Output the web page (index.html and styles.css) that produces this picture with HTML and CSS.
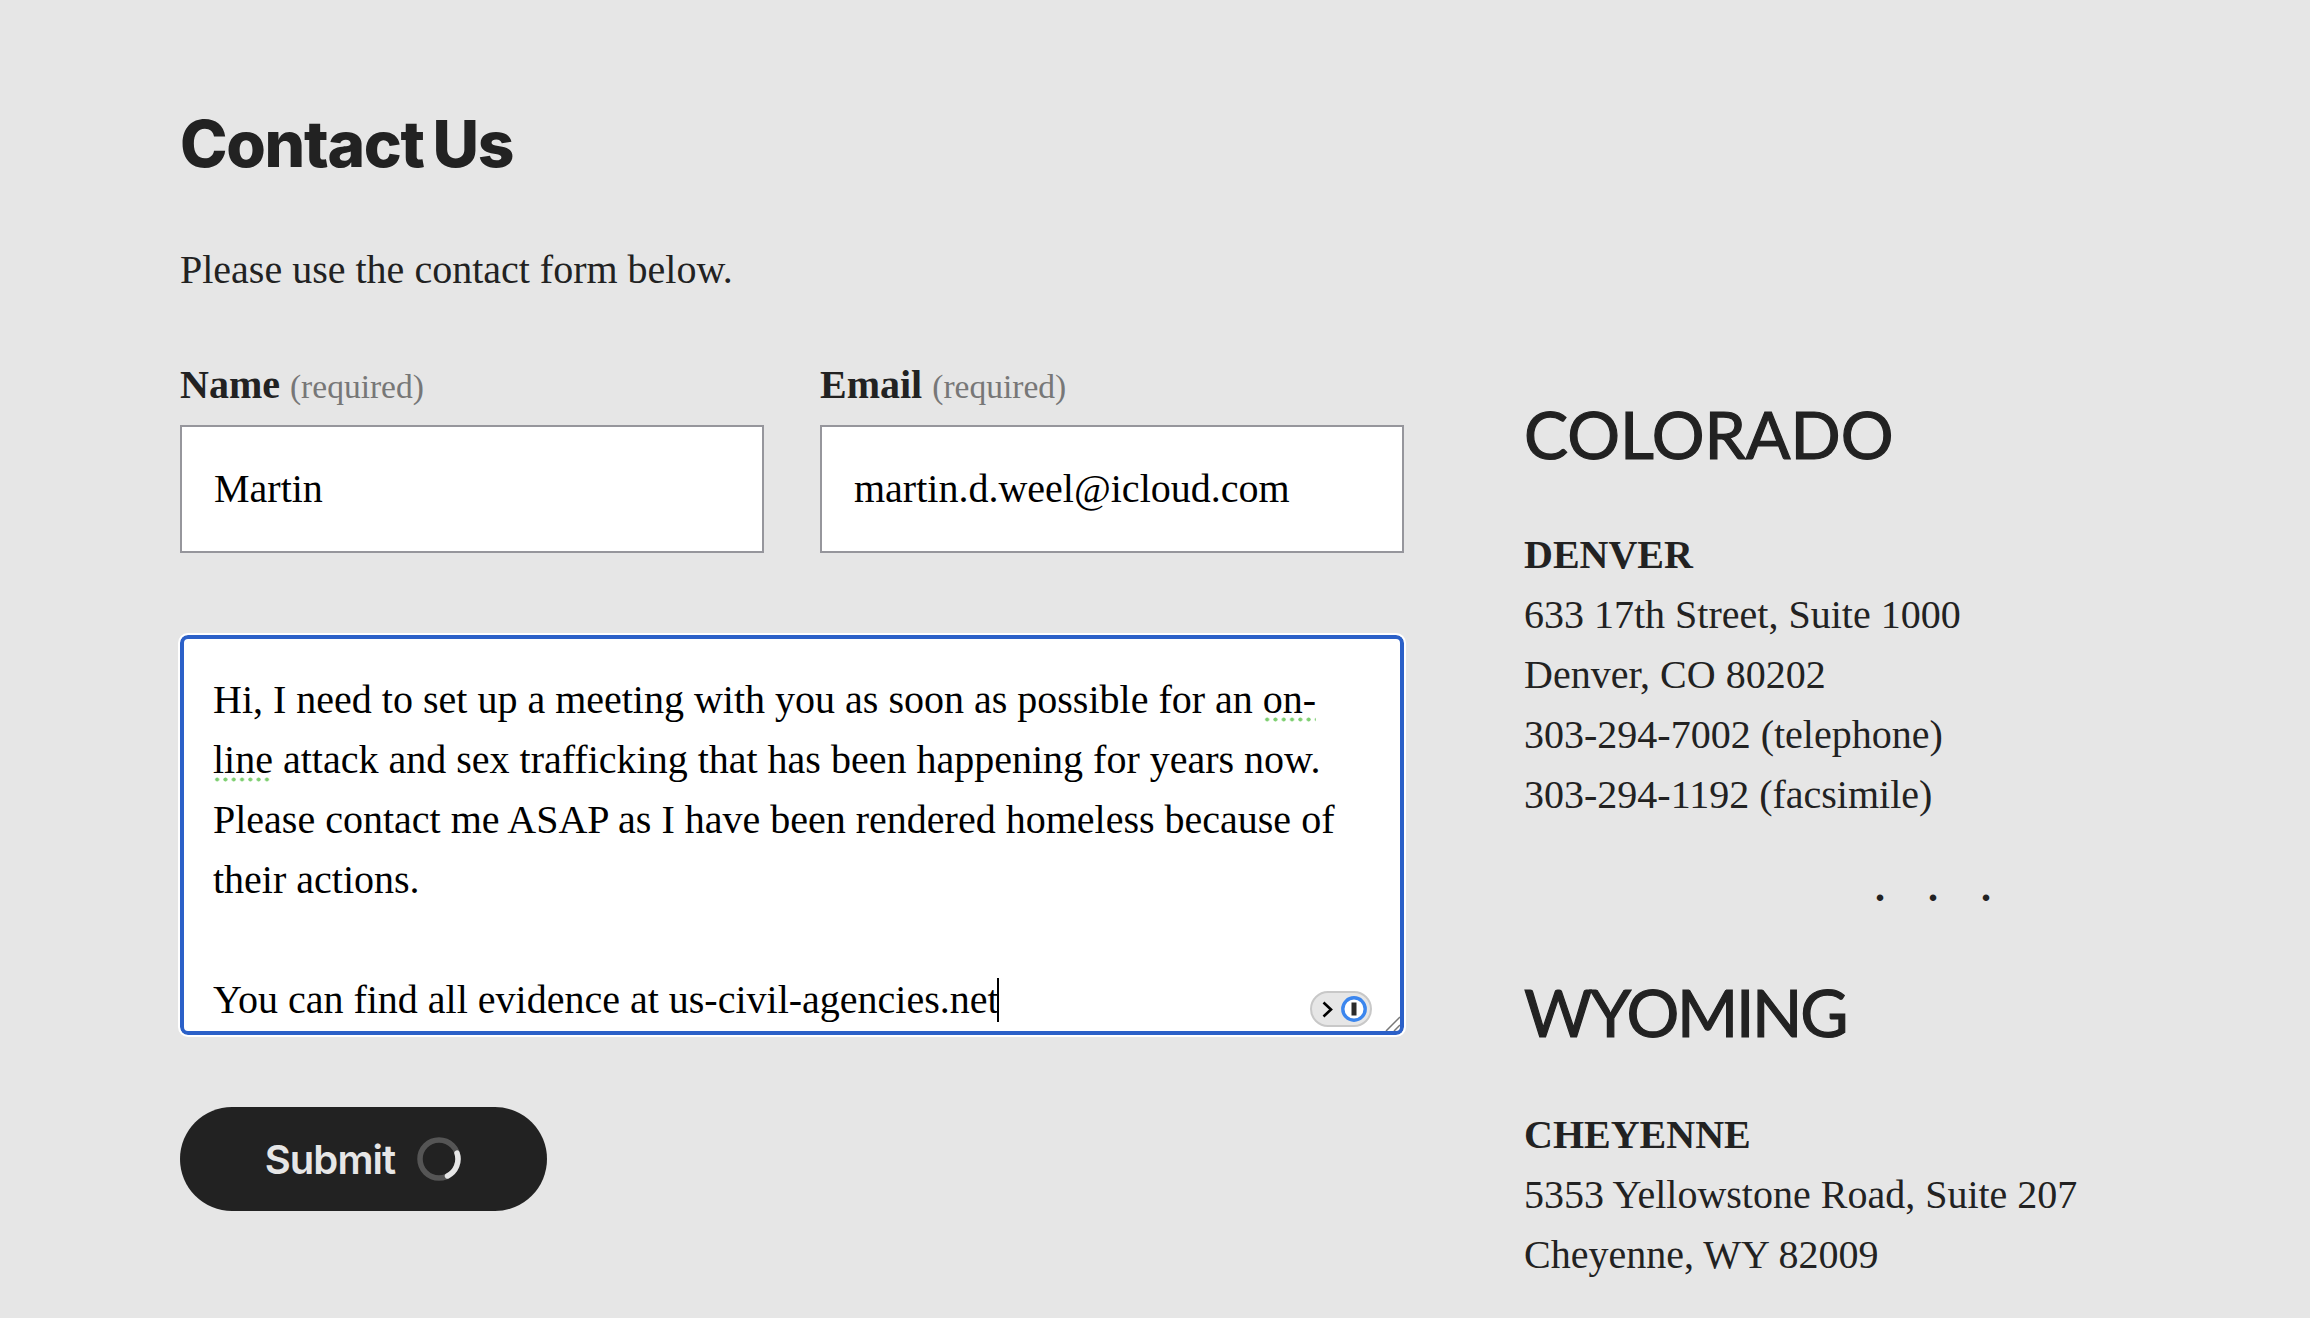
FILE: index.html
```html
<!DOCTYPE html>
<html lang="en">
<head>
<meta charset="utf-8">
<title>Contact Us</title>
<link rel="stylesheet" href="styles.css">
</head>
<body>
<main class="page">
  <section class="form-col">
    <h1 class="title">Contact Us</h1>
    <p class="intro">Please use the contact form below.</p>
    <form class="form">
      <div class="row">
        <div class="field">
          <div class="label"><b>Name</b> <span class="req">(required)</span></div>
          <div class="input">Martin</div>
        </div>
        <div class="field">
          <div class="label"><b>Email</b> <span class="req">(required)</span></div>
          <div class="input">martin.d.weel@icloud.com</div>
        </div>
      </div>
      <div class="textarea">
        <div class="ta-text">Hi, I need to set up a meeting with you as soon as possible for an <span class="spell">on-</span><br><span class="spell">line</span> attack and sex trafficking that has been happening for years now.<br>Please contact me ASAP as I have been rendered homeless because of<br>their actions.<br><br>You can find all evidence at us-civil-agencies.net<span class="caret"></span></div>
        <div class="pm">
          <svg class="pm-arrow" width="11" height="17" viewBox="0 0 11 17"><path d="M1.5 1.5l7.5 7-7.5 7" fill="none" stroke="#000" stroke-width="2.6"/></svg>
          <svg class="pm-logo" width="26" height="26" viewBox="0 0 26 26"><circle cx="13" cy="13" r="11.2" fill="#fff" stroke="#3b86ee" stroke-width="3.4"/><rect x="10.5" y="6.5" width="5" height="13" fill="#2b2b2b"/></svg>
        </div>
        <svg class="grip" width="16" height="16" viewBox="0 0 16 16"><path d="M2 16L16 2M10 16l6-6" stroke="#777" stroke-width="1.5" fill="none"/></svg>
      </div>
      <button class="submit" type="button">
        <span>Submit</span>
        <svg class="spinner" width="46" height="46" viewBox="0 0 46 46"><circle cx="23" cy="23" r="19" fill="none" stroke="#555" stroke-width="5.5"/><path d="M41 17A19 19 0 0 1 31.5 40" fill="none" stroke="#e6e6e6" stroke-width="5.5" stroke-linecap="round"/></svg>
      </button>
    </form>
  </section>
  <aside class="offices">
    <h2 class="state">COLORADO</h2>
    <address class="office"><b class="city">DENVER</b><br>633 17th Street, Suite 1000<br>Denver, CO 80202<br>303-294-7002 (telephone)<br>303-294-1192 (facsimile)</address>
    <div class="dots"><span>.</span><span>.</span><span>.</span></div>
    <h2 class="state state-wy">WYOMING</h2>
    <address class="office"><b class="city">CHEYENNE</b><br>5353 Yellowstone Road, Suite 207<br>Cheyenne, WY 82009</address>
  </aside>
</main>
</body>
</html>
```
FILE: styles.css
```css
* { box-sizing: border-box; }
html, body { margin: 0; height: 100%; overflow: hidden; }
body {
  background: #e6e6e6;
  color: #222;
  font-family: "Liberation Serif", "Times New Roman", serif;
  font-size: 40px;
  line-height: 60px;
}
.page {
  display: grid;
  grid-template-columns: 1224px 1fr;
  column-gap: 120px;
  padding: 0 0 0 180px;
  height: 1318px;
  overflow: hidden;
}
.form-col { padding-top: 106px; }
.title {
  margin: 0;
  font-family: Inter, "Liberation Sans", sans-serif;
  font-weight: 800;
  font-size: 64px;
  line-height: 76px;
  letter-spacing: -1.3px;
  word-spacing: -4px;
}
.intro { margin: 58px 0 0; }
.form { margin-top: 55px; }
.row { display: grid; grid-template-columns: 584px 584px; column-gap: 56px; }
.label { line-height: 60px; margin-bottom: 8px; }
.req { color: #777; font-size: 33.5px; }
.input {
  height: 128px;
  padding: 0 32px;
  display: flex;
  align-items: center;
  background: #fff;
  border: 2px solid #96969c;
  color: #000;
}
.textarea {
  position: relative;
  height: 400px;
  margin-top: 82px;
  background: #fff;
  border: 4px solid #2b60c8;
  border-radius: 8px;
  outline: 2px solid #fff;
  padding: 31px 29px 0;
  color: #000;
  overflow: hidden;
  white-space: nowrap;
}
.ta-text { height: 360px; overflow: hidden; }
.spell {
  background-image: radial-gradient(circle, #7fcf72 1.7px, transparent 2.3px);
  background-size: 8.3px 5px;
  background-repeat: repeat-x;
  background-position: 0 100%;
}
.caret {
  display: inline-block;
  width: 2px;
  height: 44px;
  margin-left: -2px;
  background: #000;
  vertical-align: -9px;
}
.pm {
  position: absolute;
  right: 28px;
  bottom: 4px;
  width: 62px;
  height: 36px;
  display: flex;
  align-items: center;
  justify-content: space-between;
  padding: 0 3px 0 10px;
  background: #e6e6e6;
  border: 2px solid #c8c8c8;
  border-radius: 18px;
}
.grip { position: absolute; right: 0; bottom: 0; }
.submit {
  display: flex;
  align-items: center;
  justify-content: center;
  gap: 21px;
  width: 367px;
  height: 104px;
  margin-top: 72px;
  padding: 0;
  border: 0;
  border-radius: 52px;
  background: #222;
  color: #e6e6e6;
  font-family: Inter, "Liberation Sans", sans-serif;
  font-weight: 600;
  font-size: 40px;
  letter-spacing: -0.9px;
}
.offices { padding-top: 393px; }
.state {
  margin: 0;
  font-family: Lato, "Liberation Sans", sans-serif;
  font-weight: 400;
  font-size: 66px;
  line-height: 82px;
  -webkit-text-stroke: 1.2px #222;
}
.state-wy { letter-spacing: -2.3px; padding-bottom: 2px; }
.office { margin-top: 50px; font-style: normal; }
.city { font-weight: 700; }
.dots {
  display: flex;
  gap: 43px;
  padding-left: 351px;
  margin-top: 33px;
  height: 60px;
  margin-bottom: 53px;
  font-weight: 700;
}
```
